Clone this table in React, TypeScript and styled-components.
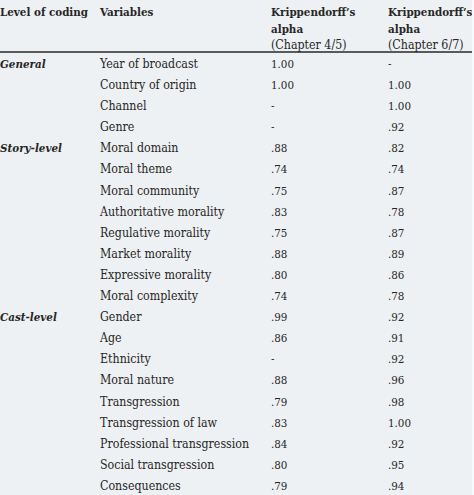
import React from "react";
import styled, { createGlobalStyle } from "styled-components";

const Global = createGlobalStyle`
  html, body { margin: 0; padding: 0; background: #eef1f3; }
  body { font-family: "DejaVu Serif Condensed", "DejaVu Serif", serif; font-stretch: condensed; color: #262626; }
`;

const Page = styled.div`
  width: 474px;
  height: 495px;
  overflow: hidden;
  background: #eef1f3;
  box-sizing: border-box;
  border-right: 2px solid #f7f9fa;
`;

const Row = styled.div<{ $head?: boolean }>`
  display: grid;
  grid-template-columns: 100px 171px 117px 1fr;
  align-items: start;
  font-size: 12.3px;
  height: ${(p) => (p.$head ? "53px" : "21.1px")};
  line-height: ${(p) => (p.$head ? "16.5px" : "21.1px")};
  padding-top: ${(p) => (p.$head ? "4px" : "0")};
  box-sizing: border-box;
  border-bottom: ${(p) => (p.$head ? "2px solid #5a5a5a" : "none")};
  margin-bottom: ${(p) => (p.$head ? "1px" : "0")};
  white-space: nowrap;
`;

const Cell = styled.div<{ $bold?: boolean; $italic?: boolean }>`
  font-weight: ${(p) => (p.$bold ? 700 : 400)};
  font-style: ${(p) => (p.$italic ? "italic" : "normal")};
  font-size: ${(p) => (p.$bold ? "11.5px" : "inherit")};
`;

const Num = styled.div`
  font-size: 11.5px;
`;

const Light = styled.span`
  font-weight: 400;
  font-size: 12.3px;
`;

type R = [string, string, string, string];

const rows: R[] = [
  ["General", "Year of broadcast", "1.00", "-"],
  ["", "Country of origin", "1.00", "1.00"],
  ["", "Channel", "-", "1.00"],
  ["", "Genre", "-", ".92"],
  ["Story-level", "Moral domain", ".88", ".82"],
  ["", "Moral theme", ".74", ".74"],
  ["", "Moral community", ".75", ".87"],
  ["", "Authoritative morality", ".83", ".78"],
  ["", "Regulative morality", ".75", ".87"],
  ["", "Market morality", ".88", ".89"],
  ["", "Expressive morality", ".80", ".86"],
  ["", "Moral complexity", ".74", ".78"],
  ["Cast-level", "Gender", ".99", ".92"],
  ["", "Age", ".86", ".91"],
  ["", "Ethnicity", "-", ".92"],
  ["", "Moral nature", ".88", ".96"],
  ["", "Transgression", ".79", ".98"],
  ["", "Transgression of law", ".83", "1.00"],
  ["", "Professional transgression", ".84", ".92"],
  ["", "Social transgression", ".80", ".95"],
  ["", "Consequences", ".79", ".94"],
];

export default function App() {
  return (
    <Page>
      <Global />
      <Row $head>
        <Cell $bold>Level of coding</Cell>
        <Cell $bold>Variables</Cell>
        <Cell $bold>
          Krippendorff’s
          <br />
          alpha
          <br />
          <Light>(Chapter 4/5)</Light>
        </Cell>
        <Cell $bold>
          Krippendorff’s
          <br />
          alpha
          <br />
          <Light>(Chapter 6/7)</Light>
        </Cell>
      </Row>
      {rows.map((r, i) => (
        <Row key={i}>
          <Cell $bold $italic>
            {r[0]}
          </Cell>
          <Cell>{r[1]}</Cell>
          <Num>{r[2]}</Num>
          <Num>{r[3]}</Num>
        </Row>
      ))}
    </Page>
  );
}
